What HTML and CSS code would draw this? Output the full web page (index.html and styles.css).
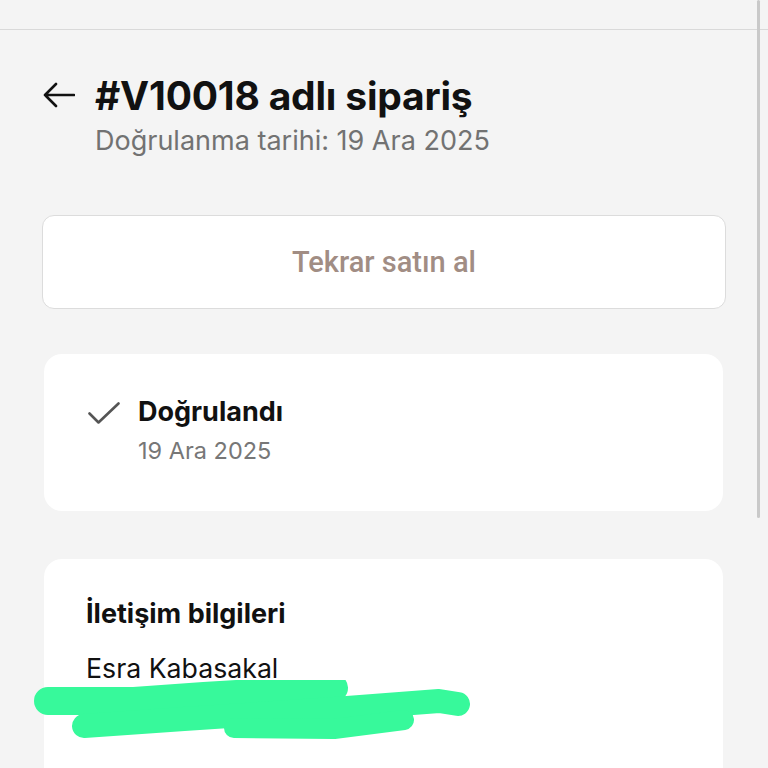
FILE: index.html
```html
<!DOCTYPE html>
<html lang="tr">
<head>
<meta charset="utf-8">
<link rel="stylesheet" href="styles.css">
</head>
<body>
<div class="topbar"></div>
<div class="scrollbar"></div>
<main class="page">
  <header class="head">
    <svg class="back" width="32" height="26" viewBox="0 0 32 26"><path d="M31 13H2M13 2L2 13l11 11" fill="none" stroke="#111" stroke-width="2.6" stroke-linecap="round" stroke-linejoin="round"/></svg>
    <div class="head-text">
      <h1 class="title">#V10018 adlı sipariş</h1>
      <div class="subtitle">Doğrulanma tarihi: 19 Ara 2025</div>
    </div>
  </header>
  <button class="rebuy">Tekrar satın al</button>
  <section class="card status">
    <svg class="check" width="32" height="22" viewBox="0 0 32 22"><path d="M1.5 11.5l9 9L30.5 1.5" fill="none" stroke="#555" stroke-width="2.6" stroke-linecap="round" stroke-linejoin="round"/></svg>
    <div>
      <div class="status-title">Doğrulandı</div>
      <div class="status-date">19 Ara 2025</div>
    </div>
  </section>
  <section class="card contact">
    <div class="contact-title">İletişim bilgileri</div>
    <div class="contact-name">Esra Kabasakal</div>
    <div class="contact-mail">
      <svg class="redact" width="440" height="62" viewBox="0 0 440 62">
        <g fill="none" stroke="#37f99b" stroke-linecap="round" stroke-linejoin="round">
          <path d="M14 21 L100 21 L170 16 L300 8" stroke-width="28"/>
          <path d="M50 46 L150 39 L300 29 L405 21 L424 24" stroke-width="24"/>
          <path d="M200 48 L300 49 L370 40" stroke-width="20"/>
        </g>
      </svg>
    </div>
  </section>
</main>
</body>
</html>
```
FILE: styles.css
```css
html, body { margin: 0; padding: 0; }
body {
  background: #f4f4f4;
  font-family: Inter, "Noto Sans", "DejaVu Sans", sans-serif;
  width: 768px;
  height: 768px;
  overflow: hidden;
  position: relative;
}
.topbar {
  height: 29px;
  border-bottom: 1px solid #d9d9d9;
}
.scrollbar {
  position: absolute;
  left: 757px;
  top: 0;
  width: 3px;
  height: 518px;
  background: #c9c9c9;
  border-radius: 2px;
}
.page {
  padding: 0 43px 0 42px;
}
.head {
  display: flex;
  align-items: flex-start;
  margin-top: 43px;
  gap: 20px;
}
.back { margin-left: 1px; margin-top: 9px; flex: none; }
.title {
  margin: 0;
  font-size: 39px;
  font-weight: 700;
  line-height: 46px;
  color: #111;
  letter-spacing: -0.2px;
}
.subtitle {
  margin-top: 5px;
  font-size: 27px;
  line-height: 34px;
  color: #727272;
}
.rebuy {
  display: block;
  width: 684px;
  height: 94px;
  margin-top: 57px;
  background: #fff;
  border: 1px solid #dcdcdc;
  border-radius: 12px;
  font-family: Roboto, "Noto Sans", sans-serif;
  font-size: 29px;
  font-weight: 500;
  color: #a18d84;
  padding: 0;
}
.card {
  background: #fff;
  border-radius: 18px;
  margin-left: 2px;
  width: 679px;
}
.status {
  margin-top: 45px;
  height: 157px;
  display: flex;
  align-items: flex-start;
  gap: 18px;
  padding: 0 0 0 44px;
  box-sizing: border-box;
}
.check { margin-top: 48px; flex: none; }
.status-title {
  margin-top: 41px;
  font-size: 27px;
  font-weight: 700;
  line-height: 34px;
  color: #111;
}
.status-date {
  margin-top: 7px;
  font-size: 23.5px;
  line-height: 30px;
  color: #777;
}
.contact {
  margin-top: 48px;
  height: 209px;
  border-radius: 18px 18px 0 0;
  padding: 38px 0 0 42px;
  box-sizing: border-box;
}
.contact-title {
  font-size: 27px;
  font-weight: 700;
  line-height: 34px;
  color: #111;
}
.contact-name {
  margin-top: 20px;
  font-size: 26.7px;
  line-height: 34px;
  color: #111;
}
.contact-mail {
  margin-left: -52px;
  margin-top: -5px;
  height: 62px;
}
.redact { display: block; }
```
